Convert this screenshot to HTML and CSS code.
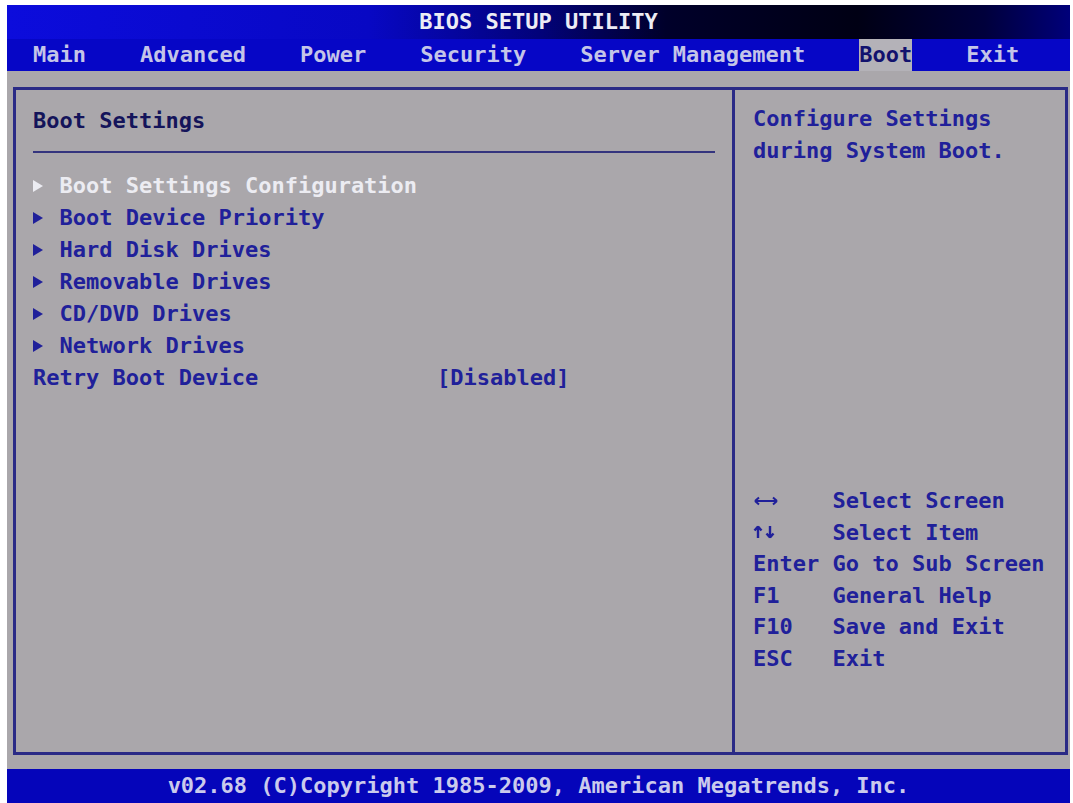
FILE: index.html
```html
<!DOCTYPE html>
<html lang="en">
<head>
    <meta charset="UTF-8">
    <meta name="viewport" content="width=device-width, initial-scale=1.0">
    <title>BIOS Setup Utility</title>
    <link rel="stylesheet" href="styles.css">
</head>
<body>

    <div class="screen">
        <div class="title-bar">BIOS SETUP UTILITY</div>

        <nav class="menu-bar">
            <span class="tab">Main</span>
            <span class="tab">Advanced</span>
            <span class="tab">Power</span>
            <span class="tab">Security</span>
            <span class="tab">Server Management</span>
            <span class="tab active">Boot</span>
            <span class="tab">Exit</span>
        </nav>

        <div class="panel">
            <section class="main-pane">
                <h1 class="pane-title">Boot Settings</h1>
                <hr class="rule">
                <ul class="items">
                    <li class="item selected"><span class="pointer"></span>Boot Settings Configuration</li>
                    <li class="item"><span class="pointer"></span>Boot Device Priority</li>
                    <li class="item"><span class="pointer"></span>Hard Disk Drives</li>
                    <li class="item"><span class="pointer"></span>Removable Drives</li>
                    <li class="item"><span class="pointer"></span>CD/DVD Drives</li>
                    <li class="item"><span class="pointer"></span>Network Drives</li>
                    <li class="item"><span class="label">Retry Boot Device</span>[Disabled]</li>
                </ul>
            </section>

            <aside class="help-pane">
                <p class="help-text">Configure Settings<br>during System Boot.</p>
                <div class="keys">
                    <div class="key-row">
                        <span class="key">
                            <svg class="arrows" width="26" height="10" viewBox="0 0 26 10"><path d="M2 5h22M2 5l4-3.5M2 5l4 3.5M24 5l-4-3.5M24 5l-4 3.5" stroke="currentColor" stroke-width="2" fill="none"/></svg>
                        </span>
                        <span>Select Screen</span>
                    </div>
                    <div class="key-row">
                        <span class="key">
                            <svg class="arrows" width="24" height="14" viewBox="0 0 24 14"><path d="M5 13V2M5 1.5l-3.5 4M5 1.5l3.5 4M17 1v11M17 12.5l-3.5-4M17 12.5l3.5-4" stroke="currentColor" stroke-width="2.4" fill="none"/></svg>
                        </span>
                        <span>Select Item</span>
                    </div>
                    <div class="key-row"><span class="key">Enter</span><span>Go to Sub Screen</span></div>
                    <div class="key-row"><span class="key">F1</span><span>General Help</span></div>
                    <div class="key-row"><span class="key">F10</span><span>Save and Exit</span></div>
                    <div class="key-row"><span class="key">ESC</span><span>Exit</span></div>
                </div>
            </aside>
        </div>

        <footer class="footer">v02.68 (C)Copyright 1985-2009, American Megatrends, Inc.</footer>
    </div>

</body>
</html>
```

FILE: styles.css
```css
* {
    margin: 0;
    padding: 0;
    box-sizing: border-box;
}
body {
    background-color: #ffffff;
    font-family: 'DejaVu Sans Mono', 'Liberation Mono', monospace;
    font-size: 22px;
    font-weight: bold;
    height: 803px;
    overflow: hidden;
}
.screen {
    margin: 5px 3px 0 7px;
    height: 798px;
    background-color: #aaa7ab;
    display: flex;
    flex-direction: column;
}
.title-bar {
    height: 34px;
    line-height: 34px;
    text-align: center;
    color: #ececf4;
    background: linear-gradient(to right, #0c0cdc 0%, #0808c4 34%, #02027a 50%, #00002a 62%, #000014 80%, #00003c 92%, #00007a 100%);
}
.menu-bar {
    height: 32px;
    display: flex;
    gap: 54px;
    padding-left: 26px;
    background-color: #0606c6;
    color: #c4c4e8;
    line-height: 32px;
}
.tab.active {
    background-color: #b4b2b8;
    color: #12126e;
}
.panel {
    flex: 1;
    display: flex;
    margin: 16px 2px 14px 6px;
    border: 3px solid #2a2a86;
    color: #20209a;
}
.main-pane {
    width: 719px;
    padding: 15px 17px 0 17px;
    border-right: 3px solid #2a2a86;
}
.pane-title {
    font-size: 22px;
    line-height: 32px;
    color: #14145a;
}
.rule {
    border: none;
    height: 2px;
    margin-top: 14px;
    margin-bottom: 17px;
    background-color: #34347e;
}
.items {
    list-style: none;
}
.item {
    display: flex;
    align-items: center;
    line-height: 32px;
}
.item.selected {
    color: #ececf2;
}
.pointer {
    width: 2ch;
    display: flex;
    align-items: center;
}
.pointer::before {
    content: "";
    border-left: 10px solid currentColor;
    border-top: 6px solid transparent;
    border-bottom: 6px solid transparent;
}
.label {
    width: 30.5ch;
}
.help-pane {
    flex: 1;
    display: flex;
    flex-direction: column;
    justify-content: space-between;
    padding: 13px 10px 78px 18px;
}
.help-text {
    line-height: 32px;
}
.key-row {
    display: flex;
    align-items: center;
    line-height: 31.5px;
}
.key {
    width: 6ch;
    display: flex;
    align-items: center;
}
.arrows {
    display: block;
}
.footer {
    height: 34px;
    line-height: 34px;
    text-align: center;
    background-color: #0505ba;
    color: #cacaec;
}
```
